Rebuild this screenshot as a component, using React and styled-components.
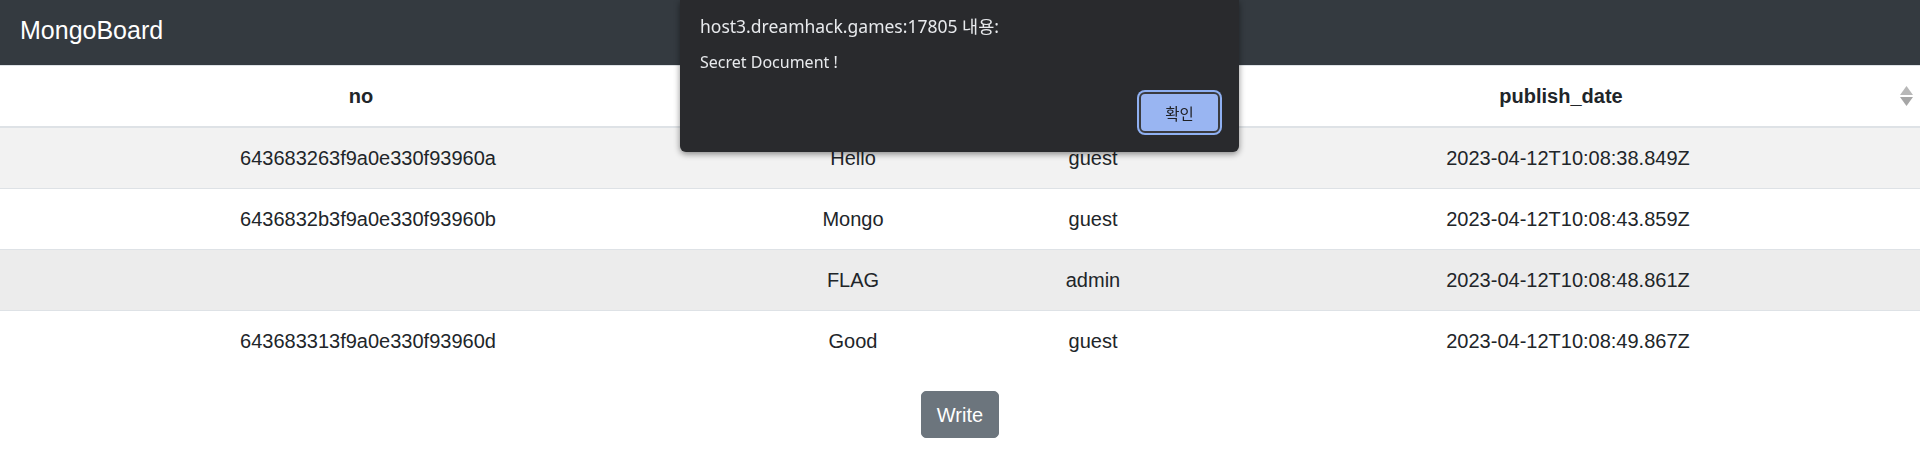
import React from 'react'
import styled, { createGlobalStyle } from 'styled-components'

const posts = [
  { id: '643683263f9a0e330f93960a', title: 'Hello', writer: 'guest', date: '2023-04-12T10:08:38.849Z' },
  { id: '6436832b3f9a0e330f93960b', title: 'Mongo', writer: 'guest', date: '2023-04-12T10:08:43.859Z' },
  { id: '', title: 'FLAG', writer: 'admin', date: '2023-04-12T10:08:48.861Z', hover: true },
  { id: '643683313f9a0e330f93960d', title: 'Good', writer: 'guest', date: '2023-04-12T10:08:49.867Z' },
]

const columns = [
  { key: 'no', width: 736 },
  { key: 'title', width: 234 },
  { key: 'writer', width: 246 },
  { key: 'publish_date', width: 704 },
]

const SortIcon = () => (
  <SortMark width="13" height="20" viewBox="0 0 13 20">
    <polygon points="6.5,0 13,9 0,9" fill="#b8b8b8" />
    <polygon points="0,11 13,11 6.5,20" fill="#a6a6a6" />
  </SortMark>
)

const App = () => (
  <>
    <GlobalStyle />
    <Navbar>
      <Brand>MongoBoard</Brand>
    </Navbar>
    <Table>
      <colgroup>
        {columns.map((c) => (
          <col key={c.key} style={{ width: c.width }} />
        ))}
      </colgroup>
      <thead>
        <tr>
          {columns.map((c) => (
            <Th key={c.key}>
              {c.key}
              <SortIcon />
            </Th>
          ))}
        </tr>
      </thead>
      <tbody>
        {posts.map((p, i) => (
          <Row key={i} $striped={i % 2 === 0} $hover={p.hover}>
            <Td>{p.id}</Td>
            <Td>{p.title}</Td>
            <Td>{p.writer}</Td>
            <Td>{p.date}</Td>
          </Row>
        ))}
      </tbody>
    </Table>
    <Actions>
      <Button>Write</Button>
    </Actions>

    <Dialog>
      <DialogTitle>host3.dreamhack.games:17805 내용:</DialogTitle>
      <DialogMessage>Secret Document !</DialogMessage>
      <DialogFooter>
        <ConfirmButton>확인</ConfirmButton>
      </DialogFooter>
    </Dialog>
  </>
)

export default App

const GlobalStyle = createGlobalStyle`
  body {
    margin: 0;
    background: #fff;
    color: #212529;
    font-family: "Liberation Sans", Arial, Helvetica, sans-serif;
    font-size: 20px;
    line-height: 1.5;
  }
`

const Navbar = styled.nav`
  height: 65px;
  box-sizing: border-box;
  padding: 15px 20px 0;
  background-color: #343a40;
`

const Brand = styled.span`
  color: #fff;
  font-size: 25px;
  line-height: 30px;
`

const Table = styled.table`
  width: 100%;
  border-collapse: collapse;
  table-layout: fixed;
`

const Th = styled.th`
  position: relative;
  padding: 15px 29px 15px 15px;
  border-top: 1px solid #dee2e6;
  border-bottom: 2px solid #dee2e6;
  font-weight: bold;
  text-align: center;
`

const SortMark = styled.svg`
  position: absolute;
  right: 7px;
  top: 50%;
  transform: translateY(-50%);
`

const Row = styled.tr`
  background-color: ${(p) => (p.$hover ? '#ececec' : p.$striped ? '#f2f2f2' : '#fff')};
`

const Td = styled.td`
  padding: 15px;
  border-top: 1px solid #dee2e6;
  text-align: center;
`

const Actions = styled.div`
  display: flex;
  justify-content: center;
  margin-top: 20px;
`

const Button = styled.button`
  font-family: inherit;
  font-size: 20px;
  line-height: 30px;
  padding: 7.5px 15px;
  color: #fff;
  background-color: #6c757d;
  border: 1px solid #6c757d;
  border-radius: 5px;
  cursor: pointer;
`

const Dialog = styled.div`
  position: fixed;
  top: 0;
  left: 680px;
  width: 559px;
  height: 152px;
  box-sizing: border-box;
  padding: 14px 19px 19px 20px;
  display: flex;
  flex-direction: column;
  background-color: #292a2d;
  border-radius: 0 0 6px 6px;
  box-shadow: 0 2px 6px rgba(0, 0, 0, 0.45);
  font-family: "Noto Sans", "Noto Sans CJK KR", sans-serif;
  color: #e8eaed;
`

const DialogTitle = styled.div`
  font-size: 17.5px;
  line-height: 24px;
`

const DialogMessage = styled.div`
  margin-top: 13px;
  font-size: 16px;
  line-height: 22px;
`

const DialogFooter = styled.div`
  margin-top: auto;
  display: flex;
  justify-content: flex-end;
`

const ConfirmButton = styled.button`
  width: 81px;
  height: 41px;
  box-sizing: border-box;
  font-family: "Noto Sans CJK KR", "Noto Sans", sans-serif;
  font-size: 15.5px;
  color: #202124;
  background-color: #99b5f2;
  border: 2px solid #3a3b3f;
  border-radius: 6px;
  box-shadow: 0 0 0 2px #8fb0f2;
`
